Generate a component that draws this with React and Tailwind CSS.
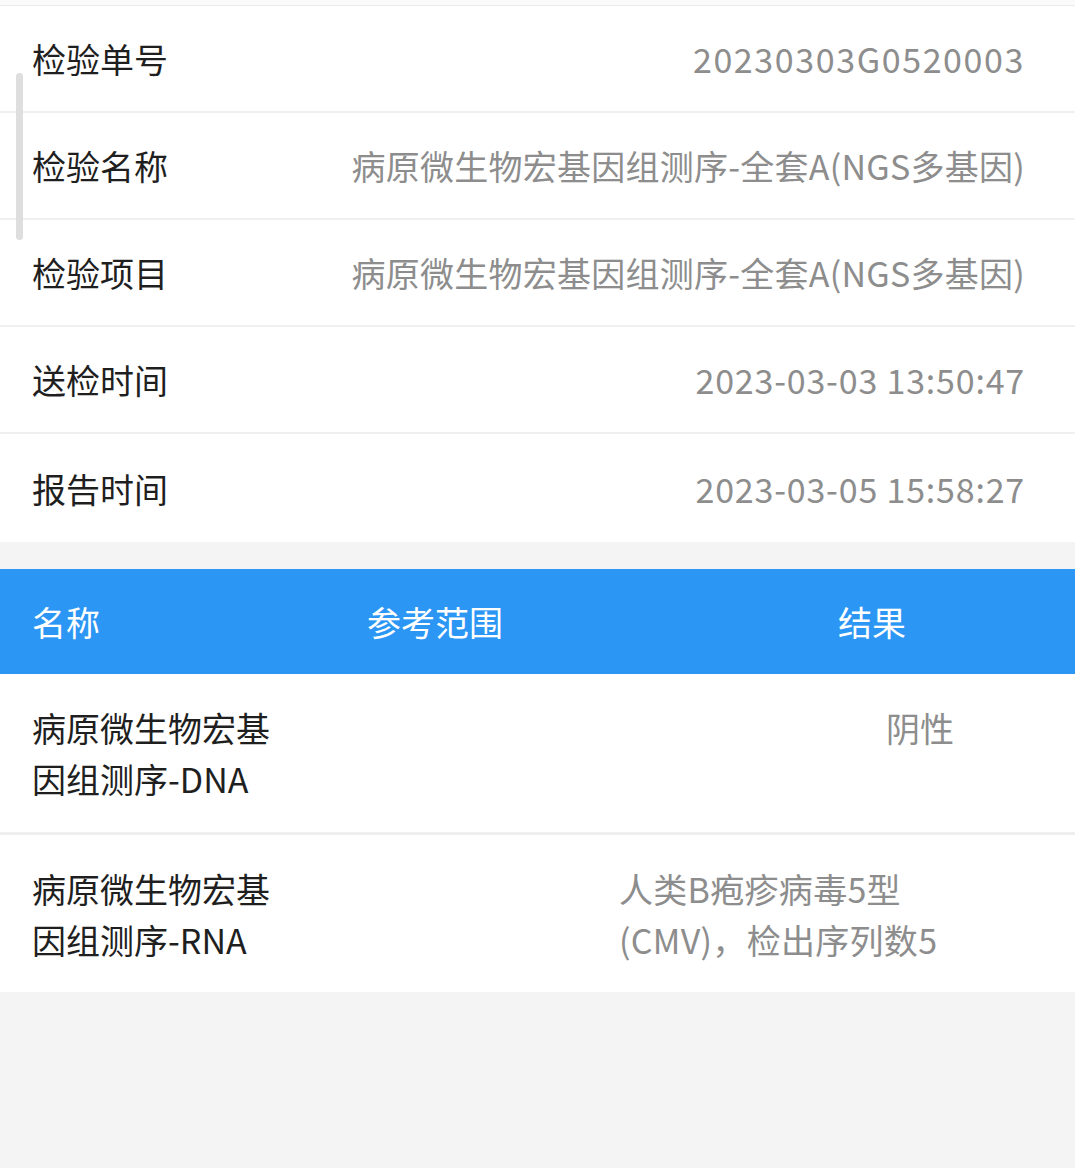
const info = [
  ['检验单号', '20230303G0520003', 'tracking-[1.6px]'],
  ['检验名称', '病原微生物宏基因组测序-全套A(NGS多基因)', 'tracking-[0.25px]'],
  ['检验项目', '病原微生物宏基因组测序-全套A(NGS多基因)', 'tracking-[0.25px]'],
  ['送检时间', '2023-03-03 13:50:47', 'tracking-[0.8px]'],
  ['报告时间', '2023-03-05 15:58:27', 'tracking-[0.8px]'],
];

const results = [
  { name: ['病原微生物宏基', '因组测序-DNA'], result: ['阴性'], wide: false },
  { name: ['病原微生物宏基', '因组测序-RNA'], result: ['人类B疱疹病毒5型', '(CMV)，检出序列数5'], wide: true },
];

export default function App() {
  return (
    <div
      className="relative min-h-[1168px] w-[1075px] bg-[#f4f4f4] text-[34px] leading-[51px]"
      style={{ fontFamily: '"Noto Sans CJK SC", "Noto Sans", sans-serif' }}
    >
      <div className="h-[5px] bg-[#fafafa]" />
      <div className="border-t border-[#ebebeb] bg-white">
        {info.map(([label, value, track], i) => (
          <div
            key={label}
            className={`flex h-[107px] items-center justify-between pl-[32px] pr-[50px] ${
              i < info.length - 1 ? 'border-b-2 border-[#f0f0f0]' : 'h-[108px]'
            }`}
          >
            <span className="text-[#1f1f1f]">{label}</span>
            <span className={`text-[#8d8d8d] ${track}`}>{value}</span>
          </div>
        ))}
      </div>

      <div className="mt-[27px] flex h-[105px] items-center bg-[#2c96f4] text-white">
        <span className="w-[367px] pl-[32px]">名称</span>
        <span className="w-[471px]">参考范围</span>
        <span>结果</span>
      </div>

      <div className="bg-white">
        {results.map((r, i) => (
          <div
            key={i}
            className={`flex py-[28px] ${i < results.length - 1 ? 'h-[161px] border-b-[3px] border-[#efefef]' : 'h-[157px]'}`}
          >
            <div className="w-[587px] pl-[32px] text-[#1f1f1f]">
              {r.name.map((l) => (
                <div key={l}>{l}</div>
              ))}
            </div>
            <div className={`text-[#8d8d8d] ${r.wide ? 'pl-[32px] tracking-[0.3px]' : 'pl-[299px]'}`}>
              {r.result.map((l) => (
                <div key={l}>{l}</div>
              ))}
            </div>
          </div>
        ))}
      </div>

      <div className="absolute left-[16px] top-[73px] h-[167px] w-[7px] rounded-full bg-[#dedede]" />
    </div>
  );
}
